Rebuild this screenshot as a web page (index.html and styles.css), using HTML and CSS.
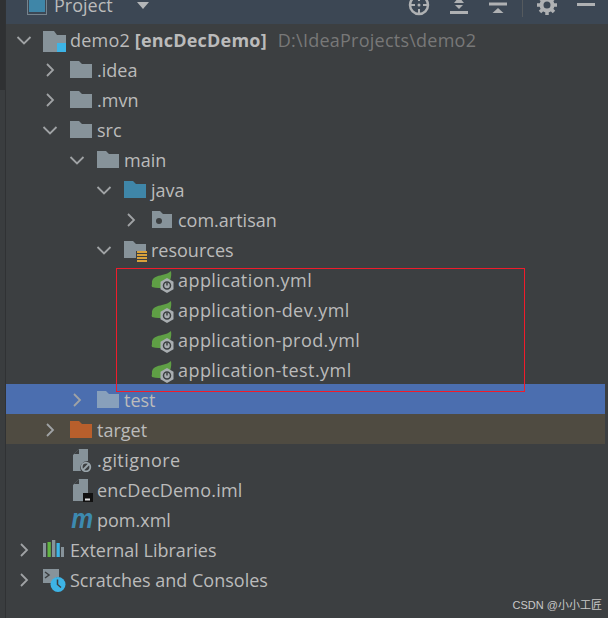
FILE: index.html
```html
<!DOCTYPE html>
<html lang="en">
<head>
<meta charset="utf-8">
<title>Project</title>
<link rel="stylesheet" href="styles.css">
</head>
<body>
<svg class="defs" width="0" height="0" aria-hidden="true">
  <defs>
    <symbol id="down" viewBox="0 0 16 16"><path d="M1.500 5l6.500 6.500L14.500 5" fill="none" stroke="#a0a3a5" stroke-width="1.800"/></symbol>
    <symbol id="right" viewBox="0 0 16 16"><path d="M5 2l6 6-6 6" fill="none" stroke="#a0a3a5" stroke-width="1.800"/></symbol>
    <symbol id="folder" viewBox="0 0 22 18"><path d="M0 1h9l3 3h10v14H0z" fill="#87939a"/></symbol>
    <symbol id="folder-blue" viewBox="0 0 22 18"><path d="M0 1h9l3 3h10v14H0z" fill="#3f86a8"/></symbol>
    <symbol id="folder-orange" viewBox="0 0 22 18"><path d="M0 1h9l3 3h10v14H0z" fill="#b85f2c"/></symbol>
    <symbol id="folder-sel" viewBox="0 0 22 18"><path d="M0 1h9l3 3h10v14H0z" fill="#88a0bb"/></symbol>
    <symbol id="package" viewBox="0 0 22 18"><path d="M1 1h8l3 3h9v14H1z" fill="#87939a"/><circle cx="8" cy="11" r="3" fill="#3c3f41"/></symbol>
    <symbol id="module" viewBox="0 0 24 24"><path d="M0 3h11l3 4h9v8h-9v9H0z" fill="#87939a"/><rect x="14" y="15" width="9" height="9" fill="#3db4e6"/></symbol>
    <symbol id="resources" viewBox="0 0 24 24"><path d="M1 3h9l3 3h10v7H13v7H1z" fill="#87939a"/><path d="M14 13h10v2H14zM14 16h10v2H14zM14 19h10v2H14zM14 22h10v2H14z" fill="#d7a13b"/></symbol>
    <symbol id="spring" viewBox="0 0 24 26">
      <path d="M2 17C1 10 8 9 12 8c4-1 7-2 9-4 1 6-1 12-5 15-3 2-8 3-14 1-.500-1-.500-2 0-3z" fill="#5f9f45"/>
      <path d="M17 11.500l6.500 3.700v7.600L17 26.500l-6.500-3.700v-7.600z" fill="#a9aeb1" transform="translate(0 -.500)"/>
      <circle cx="17" cy="18.500" r="3.500" fill="none" stroke="#3c3f41" stroke-width="1.500"/>
      <path d="M17 15.500v3" stroke="#3c3f41" stroke-width="1.500"/>
    </symbol>
    <symbol id="gitignore" viewBox="0 0 24 24"><path d="M10 1h9v12a7 7 0 0 0-7 10H4V7z" fill="#87939a"/><path d="M5 6l5-5v5z" fill="#3c3f41"/><circle cx="17" cy="19" r="4.300" fill="none" stroke="#9aa5ab" stroke-width="1.800"/><path d="M14 22l6-6" stroke="#9aa5ab" stroke-width="1.800"/></symbol>
    <symbol id="iml" viewBox="0 0 24 24"><path d="M10 1h9v14h-5v8H4V7z" fill="#87939a"/><path d="M5 6l5-5v5z" fill="#3c3f41"/><rect x="14" y="15" width="10" height="9" fill="#111"/><rect x="16" y="20.500" width="5" height="2" fill="#ddd"/></symbol>
    <symbol id="libraries" viewBox="0 0 24 24"><path d="M0 5h3v14H0zM9 2h3.300v17H9zM18 9h3v10h-3z" fill="#87939a"/><path d="M4.500 4h3.300v15H4.500z" fill="#62b543"/><path d="M13.500 5h3.300v14h-3.300z" fill="#3db4e6"/></symbol>
    <symbol id="scratches" viewBox="0 0 24 24"><path d="M0 1h16v8a8 8 0 0 0-7 6H0z" fill="#87939a"/><path d="M2 4l4 3-4 3" fill="none" stroke="#3c3f41" stroke-width="1.500"/><circle cx="15" cy="16.500" r="7.500" fill="#3db4e6"/><path d="M14.500 11.500v5l3.500 3" fill="none" stroke="#3c3f41" stroke-width="1.500"/></symbol>
  </defs>
</svg>

<div class="window">
  <header class="toolbar">
    <div class="toolbar-inner">
      <svg class="project-icon" width="20" height="20" viewBox="0 0 20 20"><rect x="0.500" y="0.500" width="19" height="19" fill="#3c4754" stroke="#76848e"/><rect x="2" y="2" width="16" height="15" fill="#3f86a8"/></svg>
      <span class="project-title">Project</span>
      <svg class="project-caret" width="12" height="7" viewBox="0 0 12 7"><path d="M0 0h12L6 7z" fill="#b4b6b8"/></svg>
      <span class="spacer"></span>
      <svg class="tool tool-target" width="22" height="22" viewBox="0 0 22 22"><circle cx="11" cy="11" r="9" fill="none" stroke="#afb1b3" stroke-width="2.500"/><path d="M11 1v6M11 15v6M1 11h6M15 11h6" stroke="#afb1b3" stroke-width="2"/><circle cx="11" cy="11" r="1.500" fill="#afb1b3"/></svg>
      <svg class="tool tool-expand" width="18" height="20" viewBox="0 0 18 20"><path d="M4 8l5-6 5 6zM5 10l4 4 4-4z" fill="#afb1b3"/><path d="M0 17.500h18" stroke="#afb1b3" stroke-width="3"/></svg>
      <svg class="tool tool-collapse" width="18" height="20" viewBox="0 0 18 20"><path d="M0 9h18" stroke="#afb1b3" stroke-width="3"/><path d="M3.500 18L9 13l5.500 5z" fill="#afb1b3"/></svg>
      <span class="tool-divider"></span>
      <svg class="tool tool-gear" width="20" height="20" viewBox="0 0 20 20"><circle cx="10" cy="10" r="5.500" fill="none" stroke="#afb1b3" stroke-width="4"/><path d="M10 0v4M10 16v4M0 10h4M16 10h4M3 3l3 3M14 14l3 3M17 3l-3 3M6 14l-3 3" stroke="#afb1b3" stroke-width="3.500"/></svg>
      <svg class="tool tool-min" width="18" height="4" viewBox="0 0 18 4"><rect width="18" height="3" fill="#afb1b3"/></svg>
    </div>
  </header>

  <ul class="tree">
    <li class="row l0"><svg class="chev"><use href="#down"/></svg><svg class="ico ico-big"><use href="#module"/></svg><span class="name wide-1">demo2 <b>[encDecDemo]</b></span><span class="path">D:\IdeaProjects\demo2</span></li>
    <li class="row l1"><svg class="chev"><use href="#right"/></svg><svg class="ico"><use href="#folder"/></svg><span class="name">.idea</span></li>
    <li class="row l1"><svg class="chev"><use href="#right"/></svg><svg class="ico"><use href="#folder"/></svg><span class="name">.mvn</span></li>
    <li class="row l1"><svg class="chev"><use href="#down"/></svg><svg class="ico"><use href="#folder"/></svg><span class="name">src</span></li>
    <li class="row l2"><svg class="chev"><use href="#down"/></svg><svg class="ico"><use href="#folder"/></svg><span class="name">main</span></li>
    <li class="row l3"><svg class="chev"><use href="#down"/></svg><svg class="ico"><use href="#folder-blue"/></svg><span class="name">java</span></li>
    <li class="row l4"><svg class="chev"><use href="#right"/></svg><svg class="ico"><use href="#package"/></svg><span class="name">com.artisan</span></li>
    <li class="row l3"><svg class="chev"><use href="#down"/></svg><svg class="ico ico-big"><use href="#resources"/></svg><span class="name">resources</span></li>
    <li class="row l4"><span class="chev"></span><svg class="ico ico-big ico-spring"><use href="#spring"/></svg><span class="name wide-4">application.yml</span></li>
    <li class="row l4"><span class="chev"></span><svg class="ico ico-big ico-spring"><use href="#spring"/></svg><span class="name wide-4">application-dev.yml</span></li>
    <li class="row l4"><span class="chev"></span><svg class="ico ico-big ico-spring"><use href="#spring"/></svg><span class="name wide-4">application-prod.yml</span></li>
    <li class="row l4"><span class="chev"></span><svg class="ico ico-big ico-spring"><use href="#spring"/></svg><span class="name wide-4">application-test.yml</span></li>
    <li class="row l2 selected"><svg class="chev"><use href="#right"/></svg><svg class="ico"><use href="#folder-sel"/></svg><span class="name">test</span></li>
    <li class="row l1 excluded"><svg class="chev"><use href="#right"/></svg><svg class="ico"><use href="#folder-orange"/></svg><span class="name">target</span></li>
    <li class="row l1"><span class="chev"></span><svg class="ico ico-big"><use href="#gitignore"/></svg><span class="name wide-4">.gitignore</span></li>
    <li class="row l1"><span class="chev"></span><svg class="ico ico-big"><use href="#iml"/></svg><span class="name wide-2">encDecDemo.iml</span></li>
    <li class="row l1"><span class="chev"></span><span class="ico maven">m</span><span class="name">pom.xml</span></li>
    <li class="row l0"><svg class="chev"><use href="#right"/></svg><svg class="ico ico-big"><use href="#libraries"/></svg><span class="name">External Libraries</span></li>
    <li class="row l0"><svg class="chev"><use href="#right"/></svg><svg class="ico ico-big"><use href="#scratches"/></svg><span class="name">Scratches and Consoles</span></li>
  </ul>

  <div class="highlight"></div>
  <div class="watermark">CSDN @小小工匠</div>
</div>
</body>
</html>
```

FILE: styles.css
```css
* { box-sizing: border-box; }
html, body { margin: 0; height: 100%; background: #3c3f41; overflow: hidden; }
.defs { position: absolute; }

.window {
  position: relative;
  width: 608px;
  height: 618px;
  padding: 0 3px 0 5px;
  background: #3c3f41;
  font-family: "Open Sans", "Noto Sans", sans-serif;
  color: #bbbbbb;
}
.window::before {
  content: "";
  position: absolute;
  left: 0; top: 0; bottom: 0;
  width: 5px;
  background: linear-gradient(#2f3133 0 90px, #3a3d3f 90px);
  border-right: 1px solid #303234;
}

.toolbar {
  height: 24px;
  margin-left: -5px;
  margin-right: -3px;
  background: #3c4754;
  overflow: hidden;
}
.toolbar-inner {
  display: flex;
  align-items: center;
  height: 24px;
  margin-top: -7px;
  padding-left: 27px;
}
.project-title { margin-left: 7px; font-size: 18px; color: #bbbbbb; }
.project-caret { margin-left: 24px; }
.spacer { flex: 1; }
.tool { flex: none; }
.tool-target { margin-right: 20px; }
.tool-expand { margin-right: 21px; }
.tool-collapse { margin-right: 15px; }
.tool-divider { width: 1px; height: 24px; background: #555a5e; margin-right: 14px; }
.tool-gear { margin-right: 20px; }
.tool-min { margin-right: 13px; }

.tree { list-style: none; margin: 0; padding: 0; }
.row {
  display: flex;
  align-items: center;
  height: 30px;
  padding-top: 2px;
  font-size: 18px;
  white-space: nowrap;
}
.l0 { padding-left: 11px; }
.l1 { padding-left: 37px; }
.l2 { padding-left: 64px; }
.l3 { padding-left: 91px; }
.l4 { padding-left: 118px; }

.chev { width: 16px; height: 16px; flex: none; margin-right: 12px; }
.ico { width: 22px; height: 18px; flex: none; margin: 0 5px 2px 0; }
.ico-big { width: 24px; height: 24px; margin: 0 4px 0 -1px; }
.ico-spring { height: 26px; }
.l0 .ico-big { margin-right: 3px; }
.path { margin-left: 11px; color: #787878; letter-spacing: .24px; }
.name b { font-weight: 700; }
.wide-1 { letter-spacing: .2px; }
.wide-2 { letter-spacing: .2px; }
.wide-4 { letter-spacing: .44px; }
.selected { background: #4b6eaf; }
.excluded { background: #4f4b41; }
.maven {
  font: italic 700 28px/18px "Liberation Sans", sans-serif;
  color: #3d8ab0;
  text-align: center;
  transform: scaleX(.88);
}

.highlight {
  position: absolute;
  left: 116px;
  top: 268px;
  width: 409px;
  height: 124px;
  border: 1px solid #f01c2b;
}
.watermark {
  position: absolute;
  right: 6px;
  bottom: 6px;
  font: 11px "Liberation Sans", "Noto Sans CJK SC", sans-serif;
  color: #c8c8c8;
}
```
